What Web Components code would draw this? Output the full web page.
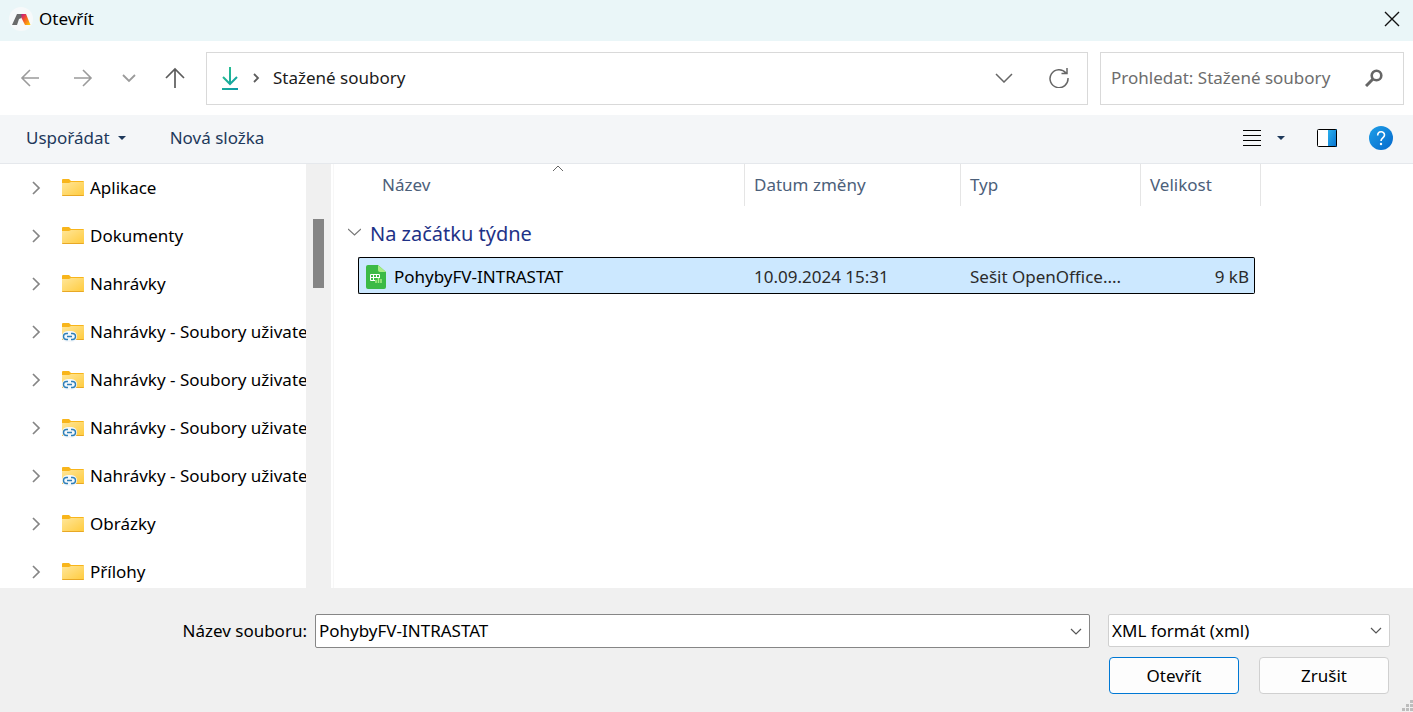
<!DOCTYPE html>
<html lang="cs">
<head>
<meta charset="utf-8">
<meta name="viewport" content="width=device-width, initial-scale=1">
<title>Otevřít</title>
<style>
    body {
        margin: 0;
        font-family: "Segoe UI", "Noto Sans", sans-serif;
        font-size: 17px;
        line-height: 24px;
        color: #000;
    }
</style>
</head>
<body>
<file-dialog>
    <title-bar slot="title">Otevřít</title-bar>
    <nav-bar slot="nav" folder="Stažené soubory"></nav-bar>
    <command-bar slot="commands"></command-bar>
    <folder-tree slot="tree">
        <tree-item>Aplikace</tree-item>
        <tree-item>Dokumenty</tree-item>
        <tree-item>Nahrávky</tree-item>
        <tree-item linked>Nahrávky - Soubory uživate</tree-item>
        <tree-item linked>Nahrávky - Soubory uživate</tree-item>
        <tree-item linked>Nahrávky - Soubory uživate</tree-item>
        <tree-item linked>Nahrávky - Soubory uživate</tree-item>
        <tree-item>Obrázky</tree-item>
        <tree-item>Přílohy</tree-item>
    </folder-tree>
    <file-list slot="files"></file-list>
    <dialog-footer slot="footer"></dialog-footer>
</file-dialog>

<script>
const RESET = `
    :host, * { box-sizing: border-box; }
    button, input, select {
        font: inherit;
        color: inherit;
        margin: 0;
        padding: 0;
        border: 0;
        background: none;
        outline: 0;
    }
    button { display: flex; align-items: center; justify-content: center; }
    svg { display: block; flex: none; }
    svg:not([fill]) { fill: none; }
`;

function define(name, render) {
    customElements.define(name, class extends HTMLElement {
        constructor() {
            super();
            this.attachShadow({ mode: "open" });
        }

        connectedCallback() {
            this.shadowRoot.innerHTML = `<style>${RESET}</style>${render(this)}`;
        }
    });
}

define("file-dialog", () => `
    <style>
        :host { display: flex; flex-direction: column; height: 100vh; background: #fff; }
        main { display: flex; flex: 1; min-height: 0; }
        slot[name="files"]::slotted(*) { flex: 1; }
    </style>
    <slot name="title"></slot>
    <slot name="nav"></slot>
    <slot name="commands"></slot>
    <main>
        <slot name="tree"></slot>
        <slot name="files"></slot>
    </main>
    <slot name="footer"></slot>
`);

define("title-bar", () => `
    <style>
        :host {
            display: flex;
            align-items: center;
            gap: 6px;
            height: 41px;
            padding: 0 11px 4px 9px;
            background: #eaf6f8;
        }
        button { margin-left: auto; width: 20px; height: 24px; }
    </style>
    <svg width="24" height="24" viewBox="0 0 24 24" aria-hidden="true">
        <defs>
            <linearGradient id="flame" x1="0" y1="0" x2="1" y2="1">
                <stop offset="0" stop-color="#c4128c"/>
                <stop offset=".4" stop-color="#f4542a"/>
                <stop offset="1" stop-color="#ffd400"/>
            </linearGradient>
        </defs>
        <circle cx="12" cy="12" r="12" fill="#f7f9fa"/>
        <path d="M8 7h6l-1.500 4-2.500 1-2 6H3z" fill="#6b6b6b"/>
        <path d="M12.500 7H17l4.500 11H16l-3.500-7z" fill="url(#flame)"/>
    </svg>
    <slot></slot>
    <button aria-label="Zavřít">
        <svg width="16" height="16" viewBox="0 0 16 16" stroke="#111" stroke-width="1.4"><path d="M1 1l14 14M15 1L1 15"/></svg>
    </button>
`);

define("nav-bar", el => `
    <style>
        :host {
            display: flex;
            align-items: center;
            gap: 12px;
            height: 74px;
            padding: 0 9px 0 20px;
            color: #1b1b1b;
        }
        nav { display: flex; align-items: center; gap: 29px; width: 174px; }
        nav button { height: 30px; }
        nav button:first-child { margin-right: 4px; }
        .box { display: flex; align-items: center; height: 53px; border: 1px solid #d9d9d9; background: #fff; }
        .address { flex: 1; padding: 0 18px 0 14px; }
        .address svg + svg { margin: 0 13px 0 14px; }
        .address button { width: 20px; height: 30px; }
        .history { margin-left: auto; margin-right: 35px; }
        .search { width: 304px; padding: 0 20px 0 10px; color: #6d6d6d; }
        .search input { flex: 1; min-width: 0; }
        .search input::placeholder { color: #6d6d6d; opacity: 1; }
    </style>
    <nav>
        <button aria-label="Zpět"><svg width="20" height="18" viewBox="0 0 20 18" stroke="#9b9b9b" stroke-width="1.6"><path d="M19 9H2M10 1L2 9l8 8"/></svg></button>
        <button aria-label="Vpřed"><svg width="20" height="18" viewBox="0 0 20 18" stroke="#9b9b9b" stroke-width="1.6"><path d="M1 9h17M10 1l8 8-8 8"/></svg></button>
        <button aria-label="Poslední umístění"><svg width="14" height="10" viewBox="0 0 14 10" stroke="#9b9b9b" stroke-width="1.8"><path d="M1 2l6 6 6-6"/></svg></button>
        <button aria-label="Nahoru"><svg width="20" height="22" viewBox="0 0 20 22" stroke="#5c5c5c" stroke-width="1.7"><path d="M10 21V3M1 11l9-9 9 9"/></svg></button>
    </nav>
    <div class="box address">
        <svg width="18" height="24" viewBox="0 0 18 24" stroke="url(#dl)" stroke-width="2">
            <defs>
                <linearGradient id="dl" gradientUnits="userSpaceOnUse" x1="0" y1="4" x2="18" y2="22">
                    <stop offset="0" stop-color="#2bc48e"/>
                    <stop offset="1" stop-color="#0b98a6"/>
                </linearGradient>
            </defs>
            <path d="M9.01 1L9 18M2 11l7 7 7-7M1 22.99L17 23"/>
        </svg>
        <svg width="7" height="10" viewBox="0 0 7 10" stroke="#5c5c5c" stroke-width="1.8"><path d="M1 1l4 4-4 4"/></svg>
        <span>${el.getAttribute("folder")}</span>
        <button class="history" aria-label="Předchozí umístění"><svg width="18" height="10" viewBox="0 0 18 10" stroke="#666" stroke-width="1.5"><path d="M1 1l8 8 8-8"/></svg></button>
        <button aria-label="Aktualizovat"><svg width="20" height="20" viewBox="0 0 20 20" stroke="#666" stroke-width="1.5"><path d="M17 5A9 9 0 1 0 19 10M18 0v5.500h-5.500"/></svg></button>
    </div>
    <label class="box search">
        <input type="text" aria-label="Prohledat" placeholder="Prohledat: ${el.getAttribute("folder")}">
        <svg width="18" height="18" viewBox="0 0 18 18" stroke="#666"><circle cx="11.500" cy="6.500" r="4.800" stroke-width="2.600"/><path d="M8 10l-7 7" stroke-width="3"/></svg>
    </label>
`);

define("command-bar", () => `
    <style>
        :host {
            display: flex;
            align-items: center;
            height: 49px;
            padding: 0 20px 2px 26px;
            border-bottom: 1px solid #e5e8ec;
            background: #f4f6f8;
            color: #1e395b;
        }
        button { gap: 8px; min-height: 24px; }
        .new { margin-left: 44px; }
        .view { margin-left: auto; gap: 15px; }
        .pane { margin: 0 31px; }
    </style>
    <button>Uspořádat <svg width="8" height="4" viewBox="0 0 8 4" fill="#1e395b"><path d="M0 0h8L4 4z"/></svg></button>
    <button class="new">Nová složka</button>
    <button class="view" aria-label="Změnit zobrazení">
        <svg width="20" height="18" viewBox="0 0 20 18" fill="#000"><path d="M1 1h18v1H1zM1 6h18v1H1zM1 11h18v1H1zM1 16h18v1H1z"/></svg>
        <svg width="8" height="4" viewBox="0 0 8 4" fill="#1e395b"><path d="M0 0h8L4 4z"/></svg>
    </button>
    <button class="pane" aria-label="Podokno náhledu">
        <svg width="22" height="20" viewBox="0 0 22 20">
            <defs><linearGradient id="pane" x1="0" y1="0" x2="1" y2="1"><stop offset="0" stop-color="#2cb2ee"/><stop offset="1" stop-color="#0670cf"/></linearGradient></defs>
            <rect x="1.500" y="1.500" width="19" height="17" rx="1" fill="#fff"/>
            <path d="M12 1h9v18h-9z" fill="url(#pane)"/>
            <rect x="1.500" y="1.500" width="19" height="17" rx="1" stroke="#000"/>
        </svg>
    </button>
    <button aria-label="Nápověda">
        <svg width="24" height="24" viewBox="0 0 24 24">
            <defs><linearGradient id="help" x1="0" y1="0" x2="1" y2="1"><stop offset="0" stop-color="#1fa0e8"/><stop offset="1" stop-color="#0568cc"/></linearGradient></defs>
            <circle cx="12" cy="12" r="12" fill="url(#help)"/>
            <path d="M8.700 9.500C8.700 4.500 15.500 4.700 15.500 9c0 2.800-3.500 3-3.500 6" stroke="#fff" stroke-width="1.600"/>
            <circle cx="12" cy="18" r="1.200" fill="#fff"/>
        </svg>
    </button>
`);

define("folder-tree", () => `
    <style>
        :host { display: flex; width: 334px; border-right: 1px solid #f7f7f7; }
        .items { flex: 1; overflow: hidden; }
        .scrollbar { width: 25px; margin-right: 2px; padding: 55px 7px 0; background: #f0f0f0; }
        .thumb { height: 69px; background: #858585; }
    </style>
    <div class="items" role="tree"><slot></slot></div>
    <div class="scrollbar"><div class="thumb"></div></div>
`);

define("tree-item", el => `
    <style>
        :host { display: flex; align-items: center; height: 48px; padding-left: 31px; white-space: nowrap; }
        button { width: 10px; height: 24px; margin-right: 21px; }
        .folder { margin-right: 6px; }
    </style>
    <button aria-label="Rozbalit"><svg width="10" height="14" viewBox="0 0 10 14" stroke="#858585" stroke-width="1.7"><path d="M2 1l6 6-6 6"/></svg></button>
    <svg class="folder" width="22" height="24" viewBox="0 0 22 24" aria-hidden="true">
        <defs><linearGradient id="f" x1="0" y1="0" x2="1" y2="1"><stop offset="0" stop-color="#ffe699"/><stop offset="1" stop-color="#ffcb3d"/></linearGradient></defs>
        <path d="M0 4q0-1 1-1h6l2 2h12q1 0 1 1v4H0z" fill="#f8b51b"/>
        <path d="M0 7h7l2-1h13v13q0 1-1 1H1q-1 0-1-1z" fill="url(#f)"/>
        <path d="M0 19h22q0 1-1 1H1q-1 0-1-1z" fill="#e8a825"/>
        ${el.hasAttribute("linked") ? `
            <rect x="0" y="11" width="15" height="11" rx="5.500" fill="#f4f8fb"/>
            <path d="M6 13.500H4.500a3 3 0 0 0 0 6H6M9 13.500h1.500a3 3 0 0 1 0 6H9M5 16.500h5" stroke="#2f7fb8" stroke-width="1.400"/>
        ` : ""}
    </svg>
    <slot></slot>
`);

define("file-list", () => `
    <style>
        :host { display: block; min-width: 0; overflow: hidden; padding-left: 14px; }
        table { table-layout: fixed; width: 913px; border-spacing: 0; }
        th, td { padding: 0; font-weight: 400; text-align: left; white-space: nowrap; }
        thead th {
            position: relative;
            height: 42px;
            padding: 0 9px;
            border-right: 1px solid #e5e5e5;
            color: #4c607a;
        }
        thead th:first-child { padding-left: 34px; }
        .sort { position: absolute; top: 1px; left: 204px; }
        .group { height: 51px; padding-top: 5px; font-size: 20px; color: #1e3287; }
        .group button { gap: 9px; }
        .group svg { margin-bottom: 4px; }
        .file { height: 37px; padding: 2px 9px 0; border: solid #000; border-width: 1px 0; background: #cce8ff; color: #2b2b2b; }
        .name { padding-left: 6px; border-left-width: 1px; border-radius: 2px 0 0 2px; color: #000; }
        .name span { display: flex; align-items: center; gap: 7px; }
        .size { padding-right: 5px; border-right-width: 1px; border-radius: 0 2px 2px 0; text-align: right; }
    </style>
    <table>
        <colgroup>
            <col style="width: 10px"><col style="width: 387px"><col style="width: 216px">
            <col style="width: 180px"><col style="width: 114px"><col style="width: 6px">
        </colgroup>
        <thead>
            <tr>
                <th colspan="2">Název<svg class="sort" width="12" height="7" viewBox="0 0 12 7" stroke="#666"><path d="M1 6l5-5 5 5"/></svg></th>
                <th>Datum změny</th>
                <th>Typ</th>
                <th colspan="2">Velikost</th>
            </tr>
        </thead>
        <tbody>
            <tr>
                <th class="group" colspan="6">
                    <button><svg width="13" height="8" viewBox="0 0 13 8" stroke="#777" stroke-width="1.200"><path d="M0 1l6.500 6L13 1"/></svg>Na začátku týdne</button>
                </th>
            </tr>
            <tr>
                <td></td>
                <td class="file name"><span>
                    <svg width="22" height="24" viewBox="0 0 22 24" aria-hidden="true">
                        <path d="M3 0h10l8 7v15q0 2-2 2H3q-2 0-2-2V2q0-2 2-2z" fill="#3cba45"/>
                        <path d="M13 0l8 7h-6q-2 0-2-2z" fill="#a9ee84"/>
                        <path d="M5.500 9.500h9v6h-9zM5.500 12.500h9M8.500 9.500v6M11.500 9.500v6" stroke="#fff"/>
                        <path d="M10 13h7v5h-7z" fill="#3cba45"/>
                        <path d="M11 18v-3M13.500 18v-5M16 18v-4" stroke="#a9ee84" stroke-width="1.500"/>
                    </svg>PohybyFV-INTRASTAT</span></td>
                <td class="file">10.09.2024 15:31</td>
                <td class="file">Sešit OpenOffice....</td>
                <td class="file size">9 kB</td>
                <td></td>
            </tr>
        </tbody>
    </table>
`);

define("dialog-footer", () => `
    <style>
        :host {
            position: relative;
            display: grid;
            grid-template-columns: 307px 1fr 282px;
            row-gap: 9px;
            padding: 26px 23px 18px 0;
            background: #f0f0f0;
        }
        .label { text-align: right; align-self: center; }
        .field { display: flex; align-items: center; height: 34px; padding: 0 7px 0 3px; border: 1px solid #868686; border-radius: 2px; background: #fff; }
        .field input { flex: 1; min-width: 0; }
        .name { margin: 0 18px 0 8px; }
        .type { position: relative; height: 33px; border-color: #d0d0d0; padding: 0; }
        .type select { width: 100%; height: 100%; padding-left: 3px; appearance: none; }
        .type svg { position: absolute; right: 7px; pointer-events: none; }
        .actions { grid-column: 3; display: flex; justify-content: space-between; padding: 0 1px; }
        .actions button { width: 130px; height: 37px; border: 1px solid #d0d0d0; border-radius: 4px; background: #fdfdfd; }
        .actions .primary { border-color: #0078d4; }
        .grip { position: absolute; right: 0; bottom: 0; }
    </style>
    <label class="label" for="filename">Název souboru:</label>
    <div class="field name">
        <input id="filename" type="text" value="PohybyFV-INTRASTAT">
        <button aria-label="Poslední názvy"><svg width="12" height="7" viewBox="0 0 12 7" stroke="#555" stroke-width="1.200"><path d="M1 1l5 5 5-5"/></svg></button>
    </div>
    <div class="field type">
        <select aria-label="Typ souboru"><option>XML formát (xml)</option></select>
        <svg width="12" height="7" viewBox="0 0 12 7" stroke="#555" stroke-width="1.200"><path d="M1 1l5 5 5-5"/></svg>
    </div>
    <div class="actions">
        <button class="primary">Otevřít</button>
        <button>Zrušit</button>
    </div>
    <svg class="grip" width="11" height="12" viewBox="0 0 11 12" fill="#bdbdbd" aria-hidden="true"><path d="M8 0h3v3H8zM4 4h3v3H4zM8 4h3v3H8zM0 8h3v3H0zM4 8h3v3H4zM8 8h3v3H8z"/></svg>
`);
</script>
</body>
</html>
